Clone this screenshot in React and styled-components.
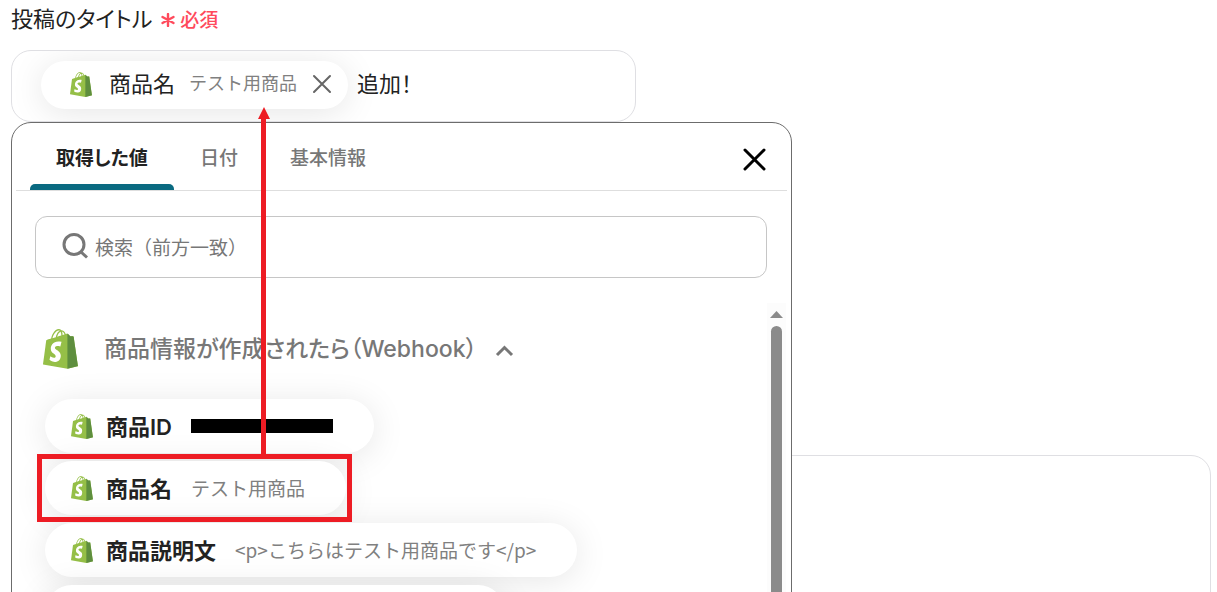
import React from "react";
import styled, { createGlobalStyle } from "styled-components";

const GlobalStyle = createGlobalStyle`
  *, *::before, *::after { box-sizing: border-box; }
  body {
    margin: 0;
    background: #fff;
    color: #222;
    font-family: "Noto Sans CJK JP", "Noto Sans", sans-serif;
  }
  button, input, textarea { font: inherit; color: inherit; }
  button { background: none; border: 0; padding: 0; cursor: pointer; }
`;

const headingFont = `Inter, "Noto Sans CJK JP", sans-serif`;

const Page = styled.main`
  position: relative;
  height: 100vh;
  overflow: hidden;
  display: flex;
  flex-direction: column;
  padding: 0 6px 0 11px;
`;

const FieldLabel = styled.label`
  display: flex;
  align-items: center;
  gap: 9px;
  flex: none;
  height: 34px;
  margin-bottom: 16px;
  font-size: 22px;
  font-feature-settings: "palt";
`;

const Required = styled.span`
  display: flex;
  align-items: center;
  gap: 5px;
  padding-top: 2px;
  font-size: 19px;
  font-weight: 500;
  color: #ff4a5c;
`;

const Asterisk = styled.svg`
  margin-top: 4px;
`;

const FieldArea = styled.div`
  position: relative;
  flex: none;
`;

const TitleField = styled.div`
  display: flex;
  align-items: center;
  gap: 9px;
  max-width: 625px;
  height: 72px;
  padding: 0 20px 2px 29px;
  border: 1px solid #dfdfe3;
  border-radius: 20px;
  overflow: hidden;
`;

const TitleInput = styled.input`
  flex: 1;
  min-width: 0;
  padding: 0 0 6px;
  border: 0;
  outline: 0;
  background: none;
  font-size: 22px;
  font-feature-settings: "palt";
`;

const Token = styled.span`
  display: flex;
  align-items: center;
  flex: none;
  height: 48px;
  padding: 0 16px 2px 29px;
  border-radius: 24px;
  background: #fff;
  box-shadow: 0 4px 34px rgba(0, 0, 0, 0.1);
  font-size: 22px;
`;

const TokenName = styled.span`
  margin: 0 14px 0 17px;
  padding-bottom: 4px;
`;

const TokenValue = styled.span`
  margin-right: 15px;
  padding-bottom: 4px;
  font-size: 18px;
  color: #808080;
`;

const IconButton = styled.button`
  display: flex;
  color: ${(p) => p.$color};
`;

const BodyField = styled.textarea`
  display: block;
  flex: none;
  width: 100%;
  height: 400px;
  margin-top: 333px;
  padding: 20px;
  border: 1px solid #dfdfe3;
  border-radius: 20px;
  resize: none;
  outline: 0;
`;

const Picker = styled.section`
  position: absolute;
  top: 72px;
  left: 0;
  width: 781px;
  max-width: 100%;
  height: 720px;
  display: flex;
  flex-direction: column;
  padding: 0 4px;
  border: 1px solid #6c6c6c;
  border-radius: 20px;
  background: #fff;
  overflow: hidden;
`;

const PickerHeader = styled.header`
  display: flex;
  align-items: center;
  justify-content: space-between;
  flex: none;
  height: 68px;
  padding: 6px 21px 0 14px;
  border-bottom: 1px solid #dedede;
`;

const Tabs = styled.div`
  display: flex;
  align-self: stretch;
`;

const Tab = styled.button`
  position: relative;
  padding: 0 26px 6px;
  font-size: 19px;
  font-weight: ${(p) => (p.$active ? 700 : 500)};
  font-feature-settings: "palt";
  color: ${(p) => (p.$active ? "#222" : "#777")};

  &::after {
    content: "";
    display: ${(p) => (p.$active ? "block" : "none")};
    position: absolute;
    left: 0;
    right: 0;
    bottom: 0;
    height: 6px;
    border-radius: 5px 5px 0 0;
    background: #0a6a81;
  }
`;

const SearchBox = styled.label`
  display: flex;
  align-items: center;
  gap: 7px;
  flex: none;
  height: 62px;
  margin: 25px 20px 25px 19px;
  padding: 0 26px 2px;
  border: 1px solid #c6c6c6;
  border-radius: 12px;
  color: #777;
`;

const SearchInput = styled.input`
  flex: 1;
  min-width: 0;
  padding: 0;
  border: 0;
  outline: 0;
  background: none;
  font-size: 19px;

  &::placeholder { color: #777; opacity: 1; }
`;

const Results = styled.div`
  flex: 1;
  min-height: 0;
  display: flex;
  overflow: hidden;
`;

const ResultList = styled.div`
  flex: 1;
  min-width: 0;
  padding: 26px 0 0 27px;
`;

const GroupToggle = styled.button`
  display: flex;
  align-items: center;
  height: 40px;
  margin-bottom: 30px;
  font-family: ${headingFont};
  font-size: 23px;
  font-weight: 500;
  font-feature-settings: "palt";
  color: #777;
`;

const GroupName = styled.span`
  margin: 0 18px 0 26px;
  padding-bottom: 4px;
`;

const Chevron = styled.svg`
  margin-top: 4px;
`;

const Chips = styled.div`
  display: flex;
  flex-direction: column;
  align-items: flex-start;
  gap: 8px;
  padding-left: 2px;
`;

const Chip = styled.button`
  position: relative;
  display: flex;
  align-items: center;
  height: 54px;
  padding: 0 41px 0 26px;
  border-radius: 27px;
  background: #fff;
  box-shadow: 0 4px 34px rgba(0, 0, 0, 0.1);
`;

const MoreChip = styled(Chip)`
  width: 460px;
`;

const ChipName = styled.strong`
  margin: 0 19px 0 13px;
  padding-bottom: 2px;
  font-family: ${headingFont};
  font-size: 22px;
  font-weight: 600;
`;

const ChipValue = styled.span`
  padding-bottom: 2px;
  font-size: 19px;
  color: #808080;
`;

const Redacted = styled.span`
  width: 142px;
  height: 14px;
  background: #000;
`;

const Highlight = styled.span`
  position: absolute;
  z-index: 1;
  inset: -7px -6px -7px -8px;
  border: 5px solid #ed1c24;
  pointer-events: none;
`;

const Scrollbar = styled.div`
  display: flex;
  flex-direction: column;
  align-items: center;
  flex: none;
  width: 19px;
  margin-right: 1px;
  padding-top: 8px;
  background: #fcfcfc;
`;

const ScrollThumb = styled.div`
  flex: 1;
  width: 11px;
  margin-top: 8px;
  border-radius: 6px 6px 0 0;
  background: #8b8b8b;
`;

const Arrow = styled.svg`
  position: absolute;
  top: 57px;
  left: 246px;
  pointer-events: none;
`;

function Bag({ size }) {
  return (
    <svg width={size} height={Math.round(size * 1.137)} viewBox="0 0 109.5 124.5" aria-hidden="true">
      <path
        fill="#95BF47"
        d="M95.9,23.9c-0.1-0.6-0.6-1-1.1-1c-0.5,0-9.3-0.2-9.3-0.2s-7.4-7.2-8.1-7.9c-0.7-0.7-2.2-0.5-2.7-0.3c0,0-1.4,0.4-3.7,1.1c-0.4-1.3-1-2.8-1.8-4.4c-2.6-5-6.5-7.7-11.1-7.7c-0.3,0-0.6,0-1,0.1c-0.1-0.2-0.3-0.3-0.4-0.5c-2-2.2-4.6-3.2-7.7-3.1c-6,0.2-12,4.5-16.8,12.2c-3.4,5.4-6,12.2-6.7,17.5c-6.9,2.1-11.7,3.6-11.8,3.7c-3.5,1.1-3.6,1.2-4,4.5C9.4,41.4,0.2,110.8,0.2,110.8l76.4,13.2l33.1-8.2C109.5,115.8,96,24.5,95.9,23.9z M67.2,16.8c-1.8,0.5-3.8,1.2-5.9,1.8c0-3-0.4-7.3-1.8-10.9C64,8.6,66.2,13.7,67.2,16.8z M57.2,19.9c-4,1.2-8.4,2.6-12.8,3.9c1.2-4.7,3.6-9.4,6.4-12.5c1.1-1.1,2.6-2.4,4.3-3.2C56.9,11.6,57.3,16.5,57.2,19.9z M49.1,4c1.4,0,2.6,0.3,3.6,0.9c-1.6,0.8-3.2,2.1-4.7,3.6c-3.8,4.1-6.7,10.5-7.9,16.6c-3.6,1.1-7.2,2.2-10.5,3.2C31.7,18.8,39.8,4.3,49.1,4z"
      />
      <path
        fill="#5E8E3E"
        d="M94.8,22.9c-0.5,0-9.3-0.2-9.3-0.2s-7.4-7.2-8.1-7.9c-0.3-0.3-0.6-0.4-1-0.5l0,109.7l33.1-8.2c0,0-13.5-91.3-13.6-92C95.8,23.3,95.3,22.9,94.8,22.9z"
      />
      <path
        fill="#fff"
        d="M58,39.9l-3.8,14.4c0,0-4.3-2-9.4-1.6c-7.5,0.5-7.5,5.2-7.5,6.4c0.4,6.4,17.3,7.8,18.3,22.9c0.7,11.9-6.3,20-16.4,20.6c-12.2,0.8-18.9-6.4-18.9-6.4l2.6-11c0,0,6.7,5.1,12.1,4.7c3.5-0.2,4.8-3.1,4.7-5.1c-0.5-8.4-14.3-7.9-15.2-21.7C23.8,51.5,31.4,40,48.1,38.9C54.5,38.5,58,39.9,58,39.9z"
      />
    </svg>
  );
}

function Cross({ size, stroke }) {
  const end = size - 2;
  return (
    <svg width={size} height={size} fill="none" stroke="currentColor" strokeWidth={stroke} strokeLinecap="round" aria-hidden="true">
      <path d={`M2 2 ${end} ${end}M${end} 2 2 ${end}`} />
    </svg>
  );
}

const items = [
  { name: "商品ID", redacted: true },
  { name: "商品名", value: "テスト用商品", highlighted: true },
  { name: "商品説明文", value: "<p>こちらはテスト用商品です</p>" },
];

export default function App() {
  return (
    <>
      <GlobalStyle />
      <Page>
        <FieldLabel htmlFor="title">
          投稿のタイトル
          <Required>
            <Asterisk width="14" height="14" viewBox="0 0 14 14" fill="none" stroke="currentColor" strokeWidth="2.4" strokeLinecap="round" aria-hidden="true">
              <path d="M7 1v12M1.500 4 12.500 10M12.500 4 1.500 10" />
            </Asterisk>
            必須
          </Required>
        </FieldLabel>

        <FieldArea>
          <TitleField>
            <Token>
              <Bag size={22} />
              <TokenName>商品名</TokenName>
              <TokenValue>テスト用商品</TokenValue>
              <IconButton type="button" aria-label="削除" $color="#666">
                <Cross size={20} stroke={2} />
              </IconButton>
            </Token>
            <TitleInput id="title" type="text" defaultValue="追加！" />
          </TitleField>

          <Picker>
            <PickerHeader>
              <Tabs role="tablist">
                <Tab type="button" role="tab" aria-selected="true" $active>取得した値</Tab>
                <Tab type="button" role="tab" aria-selected="false">日付</Tab>
                <Tab type="button" role="tab" aria-selected="false">基本情報</Tab>
              </Tabs>
              <IconButton type="button" aria-label="閉じる" $color="#000">
                <Cross size={23} stroke={3} />
              </IconButton>
            </PickerHeader>

            <SearchBox>
              <svg width="26" height="26" viewBox="0 0 26 26" fill="none" stroke="currentColor" strokeWidth="3" aria-hidden="true">
                <circle cx="12" cy="11.5" r="10" />
                <path d="m18.5 18.5 6.5 6" />
              </svg>
              <SearchInput type="search" aria-label="検索" placeholder="検索（前方一致）" />
            </SearchBox>

            <Results>
              <ResultList>
                <GroupToggle type="button" aria-expanded="true">
                  <Bag size={35} />
                  <GroupName>商品情報が作成されたら（Webhook）</GroupName>
                  <Chevron width="19" height="12" viewBox="0 0 19 12" fill="none" stroke="currentColor" strokeWidth="3" aria-hidden="true">
                    <path d="m2 10 7.5-7.5L17 10" />
                  </Chevron>
                </GroupToggle>
                <Chips>
                  {items.map((item) => (
                    <Chip type="button" key={item.name}>
                      <Bag size={22} />
                      <ChipName>{item.name}</ChipName>
                      {item.redacted ? <Redacted /> : <ChipValue>{item.value}</ChipValue>}
                      {item.highlighted && <Highlight />}
                    </Chip>
                  ))}
                  <MoreChip type="button" aria-label="次の項目" />
                </Chips>
              </ResultList>
              <Scrollbar aria-hidden="true">
                <svg width="13" height="7" viewBox="0 0 13 7">
                  <path fill="#8b8b8b" d="M6.5 0 13 7H0z" />
                </svg>
                <ScrollThumb />
              </Scrollbar>
            </Results>
          </Picker>

          <Arrow width="14" height="348" viewBox="0 0 14 348" aria-hidden="true">
            <path fill="#ed1c24" d="M7 0 13 12H9V348H4V12H1z" />
          </Arrow>
        </FieldArea>

        <BodyField aria-label="本文" />
      </Page>
    </>
  );
}
